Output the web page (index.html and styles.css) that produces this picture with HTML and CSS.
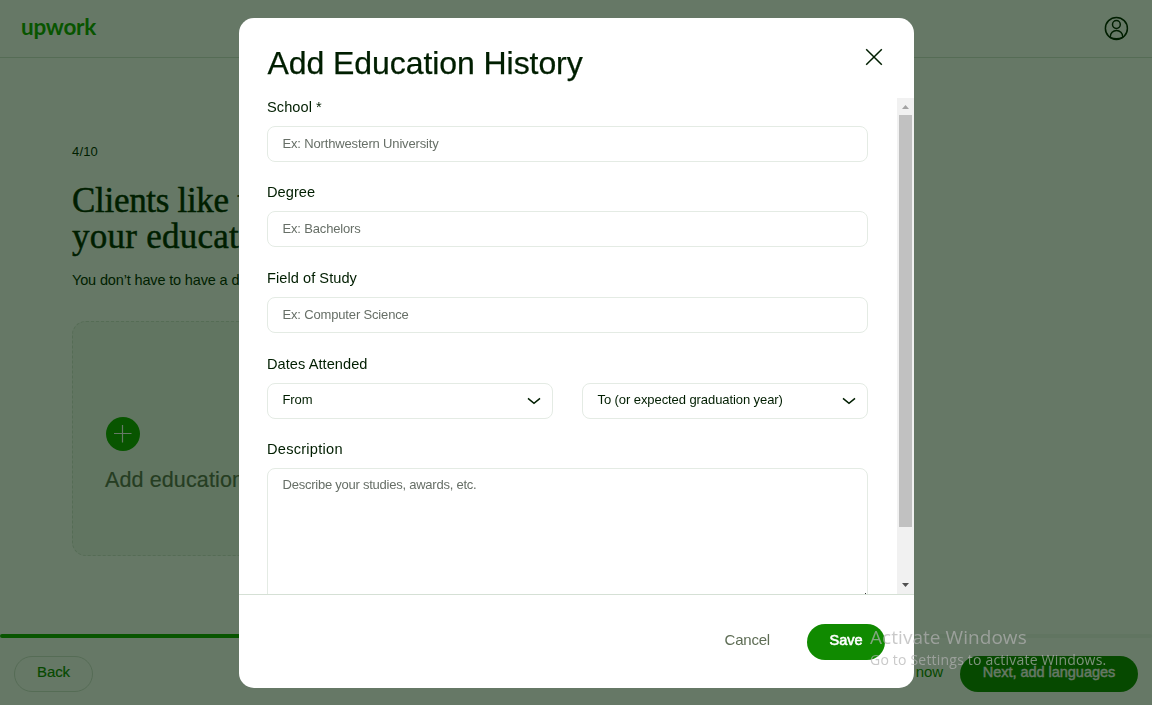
FILE: index.html
```html
<!DOCTYPE html>
<html lang="en">
<head>
<meta charset="utf-8">
<title>Add Education History</title>
<link rel="stylesheet" href="styles.css">
</head>
<body>
<div class="page">
  <header class="topbar">
    <span class="logo">upwork</span>
    <svg class="user" viewBox="0 0 24 24" fill="none" stroke="#001e00" stroke-width="1.5"><circle cx="12.400" cy="12.400" r="11"/><circle cx="12.400" cy="8.500" r="3.900"/><path d="M6.300 21.500v-.8a6.200 6.200 0 0 1 12.400 0v.8"/><path d="M6.600 21.600q5.800 2.400 11.600 0"/></svg>
  </header>
  <main class="content">
    <div class="step">4/10</div>
    <h1 class="headline"><span class="line-one">Clients like to</span><br><span>your education</span></h1>
    <p class="lead">You don’t have to have a degree</p>
    <div class="add-card">
      <svg class="plus" viewBox="0 0 34 34"><circle cx="17" cy="17" r="17" fill="#14a800"/><path d="M8 16.500h17.500M16.500 8v17.500" stroke="#fff" stroke-width="1.200"/></svg>
      <span class="add-text">Add education</span>
    </div>
  </main>
  <footer class="bottombar">
    <div class="progress"><div class="progress-fill"></div></div>
    <div class="actions">
      <span class="btn back">Back</span>
      <span class="skip">Skip for now</span>
      <span class="btn next">Next, add languages</span>
    </div>
  </footer>
</div>
<div class="overlay">
  <section class="modal">
    <header class="modal-head">
      <h2 class="modal-title">Add Education History</h2>
      <svg class="close" viewBox="0 0 18 18"><path d="M1.200 1.200l15.600 15.600M16.800 1.200L1.200 16.800" stroke="#001e00" stroke-width="1.500" fill="none"/></svg>
    </header>
    <div class="modal-body">
      <div class="form">
        <div class="field"><div class="label">School *</div><div class="input"><span class="ph">Ex: Northwestern University</span></div></div>
        <div class="field"><div class="label raised">Degree</div><div class="input"><span class="ph">Ex: Bachelors</span></div></div>
        <div class="field"><div class="label">Field of Study</div><div class="input"><span class="ph">Ex: Computer Science</span></div></div>
        <div class="field"><div class="label">Dates Attended</div>
          <div class="dates">
            <div class="input select"><span>From</span><svg class="chev" viewBox="0 0 14 8"><path d="M1 1.300l6 5 6-5" fill="none" stroke="#001e00" stroke-width="1.500"/></svg></div>
            <div class="input select"><span>To (or expected graduation year)</span><svg class="chev" viewBox="0 0 14 8"><path d="M1 1.300l6 5 6-5" fill="none" stroke="#001e00" stroke-width="1.500"/></svg></div>
          </div>
        </div>
        <div class="field"><div class="label raised wide">Description</div><div class="input textarea"><span class="ph tight">Describe your studies, awards, etc.</span><span class="grip"></span></div></div>
      </div>
      <div class="scrollbar">
        <svg class="arrow" viewBox="0 0 17 17"><path d="M5 11h7L8.500 7z" fill="#a3a3a3"/></svg>
        <div class="thumb"></div>
        <svg class="arrow" viewBox="0 0 17 17"><path d="M5 6h7l-3.500 4z" fill="#505050"/></svg>
      </div>
    </div>
    <footer class="modal-foot">
      <span class="cancel">Cancel</span>
      <span class="btn save">Save</span>
    </footer>
  </section>
</div>
<div class="watermark">
  <div class="wm-title">Activate Windows</div>
  <div class="wm-text">Go to Settings to activate Windows.</div>
</div>
</body>
</html>
```

FILE: styles.css
```css
* { box-sizing: border-box; }
body {
  margin: 0;
  height: 705px;
  overflow: hidden;
  font-family: "Liberation Sans", Arial, sans-serif;
  color: #001e00;
  background: #fff;
}
.page { display: flex; flex-direction: column; height: 705px; }
.topbar {
  display: flex;
  align-items: flex-start;
  justify-content: space-between;
  height: 58px;
  padding: 16px 24px 0 21px;
  border-bottom: 1px solid #d5e0d5;
}
.logo {
  font: 700 22.5px/21px Lato, sans-serif;
  letter-spacing: -0.25px;
  color: #14a800;
}
.user { width: 24px; height: 24px; overflow: visible; }
.content { flex: 1; padding: 84px 72px 0; }
.step { font-size: 13px; line-height: 20px; letter-spacing: 0.15px; }
.headline {
  margin: 21px 0 0;
  font: 400 35px/36px "Liberation Serif", serif;
  letter-spacing: 0.25px;
  -webkit-text-stroke: 0.5px #001e00;
  white-space: nowrap;
}
.line-one { letter-spacing: -0.3px; }
.lead { margin: 15px 0 0; font-size: 14.5px; line-height: 20px; letter-spacing: -0.15px; }
.add-card {
  display: flex;
  flex-direction: column;
  width: 700px;
  height: 235px;
  margin-top: 31px;
  padding: 95px 32px 0;
  border: 1px dashed #d5e0d5;
  border-radius: 14px;
  background: #f2f7f2;
}
.plus { width: 34px; height: 34px; margin-left: 1px; }
.add-text { margin-top: 16px; font-size: 21.5px; line-height: 26px; letter-spacing: 0.12px; color: #5e6d55; -webkit-text-stroke: 0.2px #5e6d55; }
.bottombar { height: 71px; }
.progress { height: 4px; background: #f2f7f2; border-radius: 2px; }
.progress-fill { width: 460px; height: 4px; border-radius: 2px; background: #14a800; }
.actions { display: flex; align-items: center; padding: 18px 14px 0; }
.btn {
  display: flex;
  justify-content: center;
  height: 36px;
  border-radius: 18px;
  font-size: 15px;
  line-height: 32px;
  white-space: nowrap;
}
.back { width: 79px; border: 1px solid #d5e0d5; line-height: 30px; color: #108a00; letter-spacing: -0.1px; -webkit-text-stroke: 0.2px #108a00; }
.skip { margin: -5px 17px 0 auto; font-size: 15px; color: #108a00; letter-spacing: -0.1px; }
.next {
  width: 178px;
  background: #108a00;
  color: #fff;
  font-size: 14.5px;
  letter-spacing: -0.03px;
  -webkit-text-stroke: 0.4px #fff;
}
.overlay {
  position: fixed;
  inset: 0;
  display: flex;
  align-items: flex-start;
  padding: 18px 0 0 239px;
  background: rgba(0, 30, 0, 0.6);
}
.modal {
  display: flex;
  flex-direction: column;
  width: 675px;
  height: 670px;
  overflow: hidden;
  border-radius: 15px;
  background: #fff;
}
.modal-head {
  display: flex;
  justify-content: space-between;
  height: 80px;
  padding: 25px 31px 0 28.5px;
}
.modal-title { margin: 0; font-size: 32px; line-height: 40px; font-weight: 400; letter-spacing: -0.07px; -webkit-text-stroke: 0.25px #001e00; }
.close { width: 18px; height: 18px; margin-top: 5px; }
.modal-body { display: flex; justify-content: space-between; height: 496px; overflow: hidden; }
.form { width: 629px; padding: 0.2px 0 0 28px; }
.field { height: 85.6px; }
.label { height: 27.6px; font-size: 14.6px; line-height: 18px; letter-spacing: 0.05px; }
.raised { line-height: 16px; }
.wide { letter-spacing: 0.25px; }
.input {
  height: 36px;
  padding: 0 15px 0 14.5px;
  border: 1px solid #e4ebe4;
  border-radius: 8px;
  font-size: 13px;
  line-height: 33px;
}
.ph { color: #676f67; letter-spacing: -0.16px; }
.tight { letter-spacing: -0.24px; }
.dates { display: flex; gap: 29px; }
.select { display: flex; flex: 1; justify-content: space-between; line-height: 31px; letter-spacing: -0.08px; }
.chev { width: 14px; height: 8px; margin: 13.5px -3.5px 0 0; }
.textarea { display: flex; justify-content: space-between; height: 150px; padding-right: 1px; line-height: 31px; }
.grip { width: 1px; height: 1px; margin-top: 124px; background: #333; }
.scrollbar { display: flex; flex-direction: column; width: 17px; background: #f1f1f1; }
.arrow { width: 17px; height: 17px; flex: none; }
.thumb { width: 13px; height: 412px; margin: 0 2px 50px; background: #c1c1c1; flex: none; }
.modal-foot {
  display: flex;
  justify-content: flex-end;
  height: 94px;
  padding: 29px 29px 0;
  border-top: 1px solid #d5e0d5;
}
.cancel { margin-right: 37px; font-size: 15px; line-height: 32px; color: #5e6d55; letter-spacing: -0.2px; }
.save { width: 78px; background: #108a00; color: #fff; font-size: 14.5px; -webkit-text-stroke: 0.6px #fff; }
.watermark {
  position: fixed;
  left: 870px;
  top: 624px;
  font-family: "Open Sans", "Noto Sans", sans-serif;
  color: rgba(178, 178, 178, 0.7);
  white-space: nowrap;
}
.wm-title { font-size: 19px; line-height: 26px; letter-spacing: 0.05px; }
.wm-text { font-size: 14px; line-height: 20px; letter-spacing: 0.2px; }
```
